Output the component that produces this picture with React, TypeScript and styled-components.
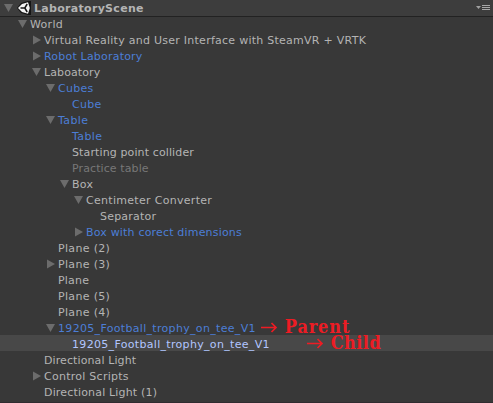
import React from "react";
import styled, { createGlobalStyle } from "styled-components";

const GlobalStyle = createGlobalStyle`
  * { box-sizing: border-box; }
  body { margin: 0; background: #383838; overflow: hidden; }
`;

type Tone = "normal" | "prefab" | "disabled" | "selected";

const tones: Record<Tone, string> = {
  normal: "#b4b4b4",
  prefab: "#4c7ed6",
  disabled: "#777777",
  selected: "#b2c6ff",
};

const Panel = styled.main`
  width: 493px;
  height: 403px;
  overflow: hidden;
  background: #383838;
  border-bottom: 1px solid #302c30;
  font-family: "DejaVu Sans", Verdana, sans-serif;
  font-size: 11px;
`;

const Header = styled.header`
  display: flex;
  align-items: center;
  height: 17px;
  padding: 0 2px 0 4px;
  background: #3d3d3d;
  border-bottom: 1px solid #222222;
`;

const SceneIcon = styled.svg`
  width: 14px;
  height: 14px;
  margin: 0 0 1px 4px;
  flex: none;
`;

const SceneTitle = styled.h1`
  flex: 1;
  margin: 0 0 0 3px;
  padding-top: 1px;
  color: #b4b4b4;
  font-size: 11px;
  font-weight: 700;
  line-height: 16px;
  letter-spacing: 0.3px;
`;

const MenuIcon = styled.svg`
  width: 15px;
  height: 9px;
  margin-bottom: 1px;
  flex: none;
`;

const Tree = styled.div`
  margin-top: -2px;
`;

const Row = styled.div<{ $depth: number; $selected?: boolean }>`
  display: flex;
  align-items: center;
  height: 16px;
  padding-left: ${(p) => 18 + p.$depth * 14}px;
  background: ${(p) => (p.$selected ? "#484848" : "transparent")};
`;

const Fold = styled.span`
  display: flex;
  width: 12px;
  padding-top: 2px;
  flex: none;
`;

const Triangle = styled.svg`
  display: block;
  width: 9px;
  height: 10px;
  flex: none;
`;

const Label = styled.span<{ $tone: Tone; $spacing: number }>`
  padding-top: 4px;
  color: ${(p) => tones[p.$tone]};
  line-height: 16px;
  white-space: pre;
  letter-spacing: ${(p) => p.$spacing}px;
`;

const Note = styled.span<{ $gap: number }>`
  display: flex;
  align-items: center;
  height: 16px;
  margin-left: ${(p) => p.$gap}px;
  color: #ed1c24;
  font-family: "DejaVu Serif Condensed", "DejaVu Serif", serif;
  font-stretch: condensed;
  font-size: 18px;
  font-weight: 700;
  line-height: 16px;
`;

const NoteText = styled.span<{ $spacing: number }>`
  margin-left: 7px;
  letter-spacing: ${(p) => p.$spacing}px;
`;

const Arrow = styled.svg`
  width: 17px;
  height: 12px;
  flex: none;
`;

function FoldArrow({ open }: { open: boolean }) {
  return (
    <Triangle viewBox="0 0 9 10">
      <path d={open ? "M0 1H9L4.5 9Z" : "M1 .5V9.5L9 5Z"} fill="#6c6c6c" />
    </Triangle>
  );
}

interface Item {
  name: string;
  depth: number;
  spacing: number;
  open?: boolean;
  tone?: Tone;
  note?: { text: string; gap: number; spacing: number };
}

const items: Item[] = [
  { name: "World", depth: 0, open: true, spacing: 0.3 },
  { name: "Virtual Reality and User Interface with SteamVR + VRTK", depth: 1, open: false, spacing: 0.26 },
  { name: "Robot Laboratory", depth: 1, open: false, tone: "prefab", spacing: 0.2 },
  { name: "Laboatory", depth: 1, open: true, spacing: 0.1 },
  { name: "Cubes", depth: 2, open: true, tone: "prefab", spacing: 0.3 },
  { name: "Cube", depth: 3, tone: "prefab", spacing: 0.3 },
  { name: "Table", depth: 2, open: true, tone: "prefab", spacing: 0.4 },
  { name: "Table", depth: 3, tone: "prefab", spacing: 0.4 },
  { name: "Starting point collider", depth: 3, spacing: 0.12 },
  { name: "Practice table", depth: 3, tone: "disabled", spacing: 0.1 },
  { name: "Box", depth: 3, open: true, spacing: 0.3 },
  { name: "Centimeter Converter", depth: 4, open: true, spacing: 0.3 },
  { name: "Separator", depth: 5, spacing: 0.2 },
  { name: "Box with corect dimensions", depth: 4, open: false, tone: "prefab", spacing: 0.18 },
  { name: "Plane (2)", depth: 2, spacing: 0.33 },
  { name: "Plane (3)", depth: 2, open: false, spacing: 0.33 },
  { name: "Plane", depth: 2, spacing: 0.2 },
  { name: "Plane (5)", depth: 2, spacing: 0.33 },
  { name: "Plane (4)", depth: 2, spacing: 0.33 },
  {
    name: "19205_Football_trophy_on_tee_V1", depth: 2, open: true, tone: "prefab", spacing: 0.32,
    note: { text: "Parent", gap: 5, spacing: 0.85 },
  },
  {
    name: "19205_Football_trophy_on_tee_V1", depth: 3, tone: "selected", spacing: 0.32,
    note: { text: "Child", gap: 37, spacing: 0.4 },
  },
  { name: "Directional Light", depth: 1, spacing: 0.1 },
  { name: "Control Scripts", depth: 1, open: false, spacing: 0.26 },
  { name: "Directional Light (1)", depth: 1, spacing: 0.17 },
];

export default function App() {
  return (
    <>
      <GlobalStyle />
      <Panel>
        <Header>
          <FoldArrow open />
          <SceneIcon viewBox="0 0 14 14">
            <path d="M0 7 4 2 11 0H14V14H11L4 12Z" fill="#151515" />
            <path d="M1 7 5 3 11 1.2 12.8 7 11 12.8 5 11Z" fill="#f4f4f4" />
            <path d="M7.8 7H3.5M7.8 7 10.2 3M7.8 7 10.2 11" stroke="#151515" strokeWidth="1.5" />
          </SceneIcon>
          <SceneTitle>LaboratoryScene</SceneTitle>
          <MenuIcon viewBox="0 0 15 9">
            <path d="M0 3H5L2.5 6Z" fill="#a0a0a0" />
            <path d="M6 2.5H14M6 4.5H14M6 6.5H14" stroke="#a8a8a8" />
          </MenuIcon>
        </Header>
        <Tree>
          {items.map((item, i) => (
            <Row key={i} $depth={item.depth} $selected={item.tone === "selected"}>
              <Fold>{item.open !== undefined && <FoldArrow open={item.open} />}</Fold>
              <Label $tone={item.tone ?? "normal"} $spacing={item.spacing}>
                {item.name}
              </Label>
              {item.note && (
                <Note $gap={item.note.gap}>
                  <Arrow viewBox="0 0 17 12">
                    <path d="M0 6.5H15M10.5 2 15 6.5 10.5 11" fill="none" stroke="#ed1c24" strokeWidth="1.7" />
                  </Arrow>
                  <NoteText $spacing={item.note.spacing}>{item.note.text}</NoteText>
                </Note>
              )}
            </Row>
          ))}
        </Tree>
      </Panel>
    </>
  );
}
